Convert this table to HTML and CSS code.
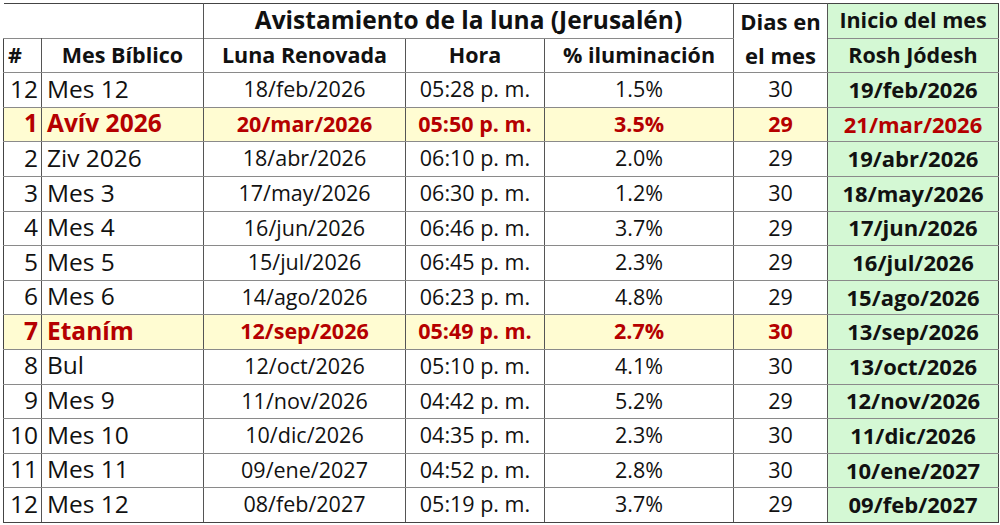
FILE: index.html
```html
<!DOCTYPE html>
<html lang="es">
<head>
<meta charset="utf-8">
<link rel="stylesheet" href="styles.css">
</head>
<body>
<table class="moon">
  <colgroup>
    <col class="c-num"><col class="c-mes"><col class="c-luna"><col class="c-hora"><col class="c-pct"><col class="c-dias"><col class="c-inicio">
  </colgroup>
  <thead>
    <tr>
      <th class="blank"></th>
      <th class="blank blank-r"></th>
      <th colspan="3" class="title">Avistamiento de la luna (Jerusalén)</th>
      <th rowspan="2" class="dias-h">Dias en<br>el mes</th>
      <th class="green">Inicio del mes</th>
    </tr>
    <tr>
      <th class="num-h">#</th>
      <th>Mes Bíblico</th>
      <th>Luna Renovada</th>
      <th>Hora</th>
      <th>% iluminación</th>
      <th class="green">Rosh Jódesh</th>
    </tr>
  </thead>
  <tbody>
    <tr><td class="num">12</td><td class="mes">Mes 12</td><td>18/feb/2026</td><td>05:28 p. m.</td><td>1.5%</td><td>30</td><td class="start">19/feb/2026</td></tr>
    <tr class="hl"><td class="num">1</td><td class="mes">Avív 2026</td><td>20/mar/2026</td><td>05:50 p. m.</td><td>3.5%</td><td>29</td><td class="start red">21/mar/2026</td></tr>
    <tr><td class="num">2</td><td class="mes">Ziv 2026</td><td>18/abr/2026</td><td>06:10 p. m.</td><td>2.0%</td><td>29</td><td class="start">19/abr/2026</td></tr>
    <tr><td class="num">3</td><td class="mes">Mes 3</td><td>17/may/2026</td><td>06:30 p. m.</td><td>1.2%</td><td>30</td><td class="start">18/may/2026</td></tr>
    <tr><td class="num">4</td><td class="mes">Mes 4</td><td>16/jun/2026</td><td>06:46 p. m.</td><td>3.7%</td><td>29</td><td class="start">17/jun/2026</td></tr>
    <tr><td class="num">5</td><td class="mes">Mes 5</td><td>15/jul/2026</td><td>06:45 p. m.</td><td>2.3%</td><td>29</td><td class="start">16/jul/2026</td></tr>
    <tr><td class="num">6</td><td class="mes">Mes 6</td><td>14/ago/2026</td><td>06:23 p. m.</td><td>4.8%</td><td>29</td><td class="start">15/ago/2026</td></tr>
    <tr class="hl"><td class="num">7</td><td class="mes">Etaním</td><td>12/sep/2026</td><td>05:49 p. m.</td><td>2.7%</td><td>30</td><td class="start">13/sep/2026</td></tr>
    <tr><td class="num">8</td><td class="mes">Bul</td><td>12/oct/2026</td><td>05:10 p. m.</td><td>4.1%</td><td>30</td><td class="start">13/oct/2026</td></tr>
    <tr><td class="num">9</td><td class="mes">Mes 9</td><td>11/nov/2026</td><td>04:42 p. m.</td><td>5.2%</td><td>29</td><td class="start">12/nov/2026</td></tr>
    <tr><td class="num">10</td><td class="mes">Mes 10</td><td>10/dic/2026</td><td>04:35 p. m.</td><td>2.3%</td><td>30</td><td class="start">11/dic/2026</td></tr>
    <tr><td class="num">11</td><td class="mes">Mes 11</td><td>09/ene/2027</td><td>04:52 p. m.</td><td>2.8%</td><td>30</td><td class="start">10/ene/2027</td></tr>
    <tr><td class="num">12</td><td class="mes">Mes 12</td><td>08/feb/2027</td><td>05:19 p. m.</td><td>3.7%</td><td>29</td><td class="start">09/feb/2027</td></tr>
  </tbody>
</table>
</body>
</html>
```

FILE: styles.css
```css
html, body {
  margin: 0;
  background: #ffffff;
}
body {
  padding: 3px 0 0 3px;
  font-family: "Open Sans", "Noto Sans", sans-serif;
  color: #111111;
}
.moon {
  border-collapse: collapse;
  table-layout: fixed;
  width: 995px;
}
.c-num { width: 38px; }
.c-mes { width: 162px; }
.c-luna { width: 202px; }
.c-hora { width: 139px; }
.c-pct { width: 189px; }
.c-dias { width: 94px; }
.c-inicio { width: 171px; }

.moon tr { height: 34.6px; }
.moon th, .moon td {
  padding: 0 2px 2px;
  border-left: 1px solid #555555;
  border-right: 1px solid #555555;
  border-top: 1px solid #8a8a8a;
  border-bottom: 1px solid #8a8a8a;
  text-align: center;
  vertical-align: middle;
  white-space: nowrap;
  line-height: 1;
}
.moon th {
  font-weight: 700;
  font-size: 21.5px;
  color: #111111;
}
.moon thead tr:first-child th { border-top: 1px solid #444444; }
.moon th.blank {
  border: none;
}
.moon th.blank-r { border-right: 1px solid #555555; }
.moon th.title { font-size: 24.5px; }
.moon th.dias-h { line-height: 34px; font-size: 22px; padding-bottom: 0; }
.moon th.num-h { text-align: left; padding-left: 4px; }
.moon thead tr:nth-child(2) th:first-child { border-left: 1px solid #444444; }
.moon th:last-child, .moon td:last-child { border-right: 1px solid #444444; }
.moon tbody tr:last-child td { border-bottom: 1px solid #444444; }
.moon td:first-child { border-left: 1px solid #444444; }

.green, .moon td.start { background: #d4f8d4; }

.moon td {
  font-size: 21.5px;
  font-weight: 400;
}
.moon td.num {
  text-align: right;
  font-size: 24.5px;
  padding: 0 3px 2px 0;
}
.moon td.mes {
  text-align: left;
  font-size: 24.5px;
  padding-left: 5px;
}
.moon td.start { font-weight: 700; font-size: 22px; }

.moon tr.hl td {
  background: #fffcd2;
  color: #b50000;
  font-weight: 700;
}
.moon tr.hl td.start {
  background: #d4f8d4;
  color: #111111;
}
.moon tr.hl td.start.red { color: #b50000; }
```
